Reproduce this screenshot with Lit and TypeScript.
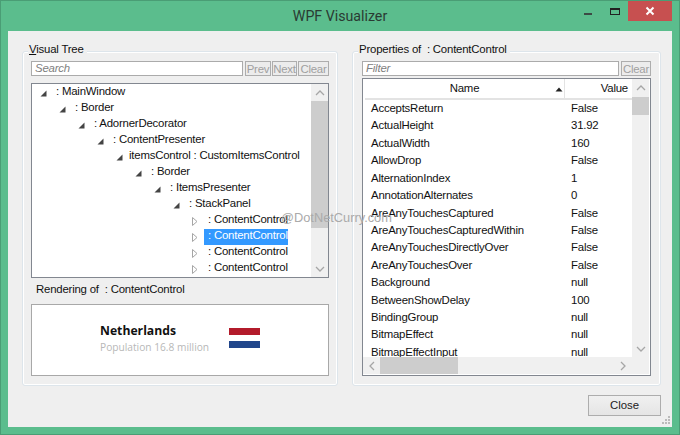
import { LitElement, html, css } from "lit";
import { customElement } from "lit/decorators.js";

const tree: [number, string, boolean, boolean][] = [
  [0, ": MainWindow", true, false],
  [1, ": Border", true, false],
  [2, ": AdornerDecorator", true, false],
  [3, ": ContentPresenter", true, false],
  [4, "itemsControl : CustomItemsControl", true, false],
  [5, ": Border", true, false],
  [6, ": ItemsPresenter", true, false],
  [7, ": StackPanel", true, false],
  [8, ": ContentControl", false, false],
  [8, ": ContentControl", false, true],
  [8, ": ContentControl", false, false],
  [8, ": ContentControl", false, false],
];

const props: [string, string][] = [
  ["AcceptsReturn", "False"],
  ["ActualHeight", "31.92"],
  ["ActualWidth", "160"],
  ["AllowDrop", "False"],
  ["AlternationIndex", "1"],
  ["AnnotationAlternates", "0"],
  ["AreAnyTouchesCaptured", "False"],
  ["AreAnyTouchesCapturedWithin", "False"],
  ["AreAnyTouchesDirectlyOver", "False"],
  ["AreAnyTouchesOver", "False"],
  ["Background", "null"],
  ["BetweenShowDelay", "100"],
  ["BindingGroup", "null"],
  ["BitmapEffect", "null"],
  ["BitmapEffectInput", "null"],
];

const chev = (d: string) => html`<svg class="chev" width="10" height="10" viewBox="0 0 10 10"><path d=${d} fill="none" stroke="#a6a6a6" stroke-width="1.3"/></svg>`;

@customElement("app-root")
export class AppRoot extends LitElement {
  static styles = css`
    :host { display: block; width: 680px; height: 435px; font-family: "Liberation Sans", Arial, sans-serif; font-size: 11.4px; letter-spacing: -0.2px; color: #111; }
    .win { box-sizing: border-box; width: 680px; height: 435px; background: #5bbd8d; border: 1px solid #4a9d75; display: flex; flex-direction: column; overflow: hidden; position: relative; }
    .title { height: 30px; flex: none; display: flex; justify-content: center; align-items: center; font-family: Roboto, sans-serif; font-size: 14.2px; letter-spacing: 0; color: #2a3a33; position: relative; padding-bottom: 1px; box-sizing: border-box; }
    .ctrls { position: absolute; right: 7px; top: 0; display: flex; align-items: flex-start; }
    .ctrl { width: 27px; height: 20px; display: flex; align-items: center; justify-content: center; }
    .close { width: 44px; background: #c75050; }
    .client { flex: 1; margin: 0 7px 7px 7px; background: #efefef; display: flex; flex-direction: column; padding: 20px 0 0 14px; box-sizing: border-box; position: relative; }
    .groups { display: flex; gap: 14px; }
    .group { box-sizing: border-box; height: 335px; border: 1px solid #dde5eb; box-shadow: inset 0 0 0 1px #fff; border-radius: 3px; position: relative; display: flex; flex-direction: column; }
    .left { width: 316px; padding: 9px 8px 8px 8px; }
    .right { width: 309px; padding: 9px 9px 8px 9px; }
    .legend { position: absolute; left: 5px; top: -10px; background: #efefef; padding: 0 3px 0 1px; line-height: 15px; }
    .legend u { text-underline-offset: 1px; }
    .searchrow { display: flex; height: 15px; gap: 1px; flex: none; }
    .input { box-sizing: border-box; border: 1px solid #ababab; background: #fff; font-style: italic; color: #808080; line-height: 13px; padding-left: 3px; flex: 1; height: 15px; }
    .btn { box-sizing: border-box; border: 1px solid #adadad; background: #ececec; color: #a0a0a0; height: 15px; line-height: 14px; text-align: center; overflow: hidden; }
    .tree { box-sizing: border-box; margin-top: 7px; height: 195px; border: 1px solid #828790; background: #fff; overflow: hidden; flex: none; display: flex; }
    .nodes { flex: 1; padding-top: 1px; overflow: hidden; }
    .node { display: flex; height: 16px; align-items: center; white-space: nowrap; }
    .arrow { flex: none; width: 20px; height: 16px; display: flex; align-items: center; }
    .arrow svg { margin-left: 8px; }
    .lbl { padding: 0 0 0 4px; height: 16px; line-height: 12px; }
    .lbl.named { padding-left: 1px; }
    .lbl.sel { background: #3399ff; color: #fff; }
    .vbar { flex: none; width: 17px; background: #f0f0f0; display: flex; flex-direction: column; align-items: center; }
    .thumb { background: #cdcdcd; width: 100%; flex: none; }
    .chev { flex: none; }
    .up { height: 17px; flex: none; display: flex; align-items: center; justify-content: center; width: 100%; }
    .spacer { flex: 1; }
    .renderlbl { margin: 4px 0 0 5px; height: 15px; line-height: 15px; flex: none; }
    .render { box-sizing: border-box; margin-top: 7px; height: 72px; border: 1px solid #a8a8a8; background: #fff; display: flex; padding: 18px 0 0 68px; flex: none; letter-spacing: 0; }
    .country { width: 129px; }
    .cname { font-weight: 700; font-size: 12.2px; line-height: 16px; font-family: "Open Sans", sans-serif; color: #111; }
    .cpop { font-size: 10.2px; line-height: 16px; color: #b8b8b8; font-family: "Open Sans", sans-serif; white-space: nowrap; }
    .flag { width: 31px; padding-top: 5px; display: flex; flex-direction: column; gap: 6px; }
    .flag div { height: 7px; }
    .red { background: #b31b2b; }
    .blue { background: #21468b; }
    .grid { box-sizing: border-box; margin-top: 2px; height: 298px; border: 1px solid #828790; background: #fff; display: grid; grid-template-columns: minmax(0, 1fr) 17px; grid-template-rows: minmax(0, 1fr) 17px; flex: none; padding: 0 1px 1px 2px; }
    .inner { overflow: hidden; min-width: 0; }
    .head { display: flex; height: 19px; border-bottom: 2px solid #e3e3e3; align-items: center; }
    .h1 { width: 200px; box-sizing: border-box; text-align: center; position: relative; border-right: 1px solid #e3e3e3; height: 19px; line-height: 19px; flex: none; }
    .sort { position: absolute; right: 1px; top: 8px; }
    .h2 { flex: 1; line-height: 19px; text-align: right; padding-right: 4px; }
    .row { display: flex; height: 17.43px; line-height: 17px; white-space: nowrap; }
    .c1 { width: 200px; padding-left: 6px; box-sizing: border-box; flex: none; }
    .c2 { padding-left: 6px; }
    .rows { height: 257px; overflow: hidden; }
    .hbar { background: #f0f0f0; display: flex; align-items: center; margin-left: -2px; }
    .hthumb { width: 78px; height: 17px; background: #cdcdcd; margin-left: 3px; flex: none; }
    .corner { background: #f0f0f0; }
    .footer { display: flex; justify-content: flex-end; padding: 9px 11px 0 0; }
    .closebtn { box-sizing: border-box; width: 73px; height: 21px; border: 1px solid #adadad; background: linear-gradient(#f0f0f0, #e5e5e5); text-align: center; line-height: 18px; color: #222; letter-spacing: 0; }
    .grip { position: absolute; right: 1px; bottom: 2px; }
    .wm { position: absolute; left: 280px; top: 209px; font-size: 12.8px; letter-spacing: 0; line-height: 15px; color: #aaa; white-space: nowrap; pointer-events: none; }
  `;

  render() {
    return html`<div class="win">
      <div class="title">
        <span>WPF Visualizer</span>
        <div class="ctrls">
          <div class="ctrl"><svg width="10" height="10" viewBox="0 0 10 10"><rect x="1" y="7" width="8" height="2" fill="#3c4a44"/></svg></div>
          <div class="ctrl"><svg width="12" height="10" viewBox="0 0 12 10"><rect x="1.5" y="2.5" width="9" height="6" fill="none" stroke="#222" stroke-width="1"/><rect x="1" y="2" width="10" height="2" fill="#222"/></svg></div>
          <div class="ctrl close"><svg width="10" height="10" viewBox="0 0 10 10"><path d="M1.5 1.5L8.5 8.5M8.5 1.5L1.5 8.5" stroke="#fff" stroke-width="2"/></svg></div>
        </div>
      </div>
      <div class="client">
        <div class="groups">
          <div class="group left">
            <div class="legend"><u>V</u>isual Tree</div>
            <div class="searchrow">
              <div class="input" style="margin-right:1px">Search</div>
              <div class="btn" style="width:26px">Prev</div>
              <div class="btn" style="width:25px">Next</div>
              <div class="btn" style="width:31px">Clear</div>
            </div>
            <div class="tree">
              <div class="nodes">
                ${tree.map(([d, t, open, sel]) => html`<div class="node" style="padding-left:${d * 19}px">
                  <div class="arrow">${open
                    ? html`<svg width="7" height="7" viewBox="0 0 7 7"><path d="M6.5 0.5V6.5H0.5Z" fill="#444"/></svg>`
                    : html`<svg width="6" height="9" viewBox="0 0 6 9"><path d="M0.5 0.5L5 4.5L0.5 8.5Z" fill="#fff" stroke="#a6a6a6"/></svg>`}</div>
                  <div class="lbl ${sel ? "sel" : ""} ${t.startsWith(":") ? "" : "named"}">${t}</div>
                </div>`)}
              </div>
              <div class="vbar">
                <div class="up">${chev("M1 7L5 3L9 7")}</div>
                <div class="thumb" style="height:127px"></div>
                <div class="spacer"></div>
                <div class="up">${chev("M1 3L5 7L9 3")}</div>
              </div>
            </div>
            <div class="renderlbl">Rendering of &nbsp;: ContentControl</div>
            <div class="render">
              <div class="country">
                <div class="cname">Netherlands</div>
                <div class="cpop">Population 16.8 million</div>
              </div>
              <div class="flag"><div class="red"></div><div class="blue"></div></div>
            </div>
          </div>
          <div class="group right">
            <div class="legend">Properties of &nbsp;: ContentControl</div>
            <div class="searchrow">
              <div class="input" style="margin-right:1px">Filter</div>
              <div class="btn" style="width:30px">Clear</div>
            </div>
            <div class="grid">
              <div class="inner">
                <div class="head">
                  <div class="h1">Name<svg class="sort" width="8" height="5" viewBox="0 0 8 5"><path d="M4 0.5L7.5 4.5H0.5Z" fill="#222"/></svg></div>
                  <div class="h2">Value</div>
                </div>
                <div class="rows">
                  ${props.map(([n, v]) => html`<div class="row"><div class="c1">${n}</div><div class="c2">${v}</div></div>`)}
                </div>
              </div>
              <div class="vbar">
                <div class="up" style="height:18px">${chev("M1 7L5 3L9 7")}</div>
                <div class="thumb" style="height:18px"></div>
                <div class="spacer"></div>
                <div class="up">${chev("M1 3L5 7L9 3")}</div>
              </div>
              <div class="hbar">
                <svg class="chev" style="margin-left:4px" width="10" height="10" viewBox="0 0 10 10"><path d="M7 1L3 5L7 9" fill="none" stroke="#a6a6a6" stroke-width="1.3"/></svg>
                <div class="hthumb"></div>
                <div class="spacer"></div>
                <svg class="chev" style="margin-right:4px" width="10" height="10" viewBox="0 0 10 10"><path d="M3 1L7 5L3 9" fill="none" stroke="#a6a6a6" stroke-width="1.3"/></svg>
              </div>
              <div class="corner"></div>
            </div>
          </div>
        </div>
        <div class="footer"><div class="closebtn">Close</div></div>
        <svg class="grip" width="9" height="9" viewBox="0 0 9 9" fill="#bbb"><rect x="6" y="0" width="2" height="2"/><rect x="3" y="3" width="2" height="2"/><rect x="6" y="3" width="2" height="2"/><rect x="0" y="6" width="2" height="2"/><rect x="3" y="6" width="2" height="2"/><rect x="6" y="6" width="2" height="2"/></svg>
      </div>
      <div class="wm">@DotNetCurry.com</div>
    </div>`;
  }
}
